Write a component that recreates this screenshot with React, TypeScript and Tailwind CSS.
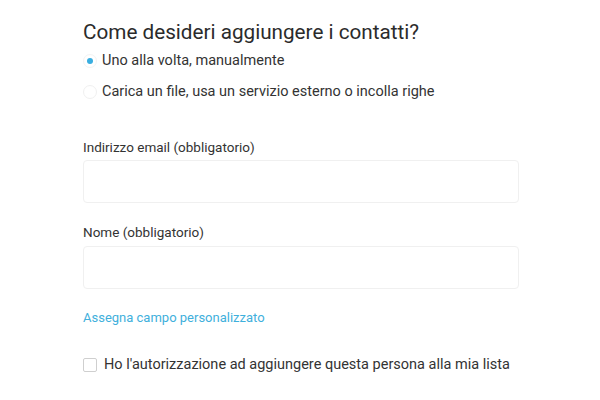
import { useState } from "react";

export default function App() {
  const [mode, setMode] = useState("manual");
  const [allowed, setAllowed] = useState(false);

  return (
    <div className="w-[600px] h-[400px] bg-white text-[#333] font-['Roboto','Liberation_Sans',sans-serif] overflow-hidden">
      <div className="ml-[83px] w-[436px] pt-[18px]">
        <h2 className="text-[20.7px] leading-[28px] font-normal text-[#2b2b2b]">
          Come desideri aggiungere i contatti?
        </h2>

        <div className="mt-[5px] flex flex-col gap-[11px]">
          <label className="flex items-center h-[20px] text-[14.5px] cursor-pointer" onClick={() => setMode("manual")}>
            <span className="w-[14px] h-[14px] rounded-full border border-[#f3f3f3] flex items-center justify-center">
              {mode === "manual" && <span className="w-[6px] h-[6px] rounded-full bg-[#3aaee0]" />}
            </span>
            <span className="ml-[5px]">Uno alla volta, manualmente</span>
          </label>
          <label className="flex items-center h-[20px] text-[14.5px] cursor-pointer" onClick={() => setMode("file")}>
            <span className="w-[14px] h-[14px] rounded-full border border-[#f0f0f0] flex items-center justify-center">
              {mode === "file" && <span className="w-[6px] h-[6px] rounded-full bg-[#3aaee0]" />}
            </span>
            <span className="ml-[5px]">Carica un file, usa un servizio esterno o incolla righe</span>
          </label>
        </div>

        <div className="mt-[35px]">
          <div className="text-[13.5px] leading-[20px]">Indirizzo email (obbligatorio)</div>
          <input
            type="email"
            className="mt-[3px] block w-full h-[43px] rounded-[4px] border border-[#f0f0f0] px-3 text-[14px] outline-none"
          />
        </div>

        <div className="mt-[19px]">
          <div className="text-[13.5px] leading-[20px]">Nome (obbligatorio)</div>
          <input
            type="text"
            className="mt-[4px] block w-full h-[43px] rounded-[4px] border border-[#f0f0f0] px-3 text-[14px] outline-none"
          />
        </div>

        <div className="mt-[19px] text-[13px] leading-[20px] text-[#3fb0dc]">
          Assegna campo personalizzato
        </div>

        <label className="mt-[27px] flex items-center h-[20px] text-[14.5px] cursor-pointer">
          <span
            onClick={() => setAllowed(!allowed)}
            className={`w-[14px] h-[14px] rounded-[2px] border ${allowed ? "border-[#3aaee0] bg-[#3aaee0]" : "border-[#cfcfcf]"}`}
          />
          <span className="ml-[7px]">Ho l'autorizzazione ad aggiungere questa persona alla mia lista</span>
        </label>
      </div>
    </div>
  );
}
